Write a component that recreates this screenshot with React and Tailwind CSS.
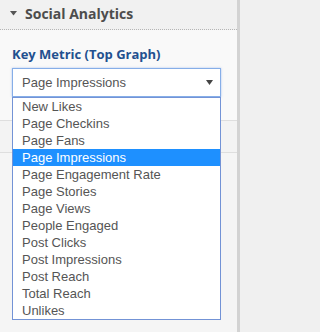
const metrics = [
  'New Likes',
  'Page Checkins',
  'Page Fans',
  'Page Impressions',
  'Page Engagement Rate',
  'Page Stories',
  'Page Views',
  'People Engaged',
  'Post Clicks',
  'Post Impressions',
  'Post Reach',
  'Total Reach',
  'Unlikes',
]

export default function App() {
  const selected = 'Page Impressions'

  return (
    <div className="flex h-[332px] w-full overflow-hidden bg-[#f1f1f1]">
      <div className="relative flex w-[237px] shrink-0 flex-col bg-[#f5f5f5]">
        <div className="flex h-[30px] items-center gap-[8px] border-b border-dotted border-[#b5b5b5] bg-[#f1f1f1] pb-[3px] pl-[10px]">
          <svg width="7" height="5" viewBox="0 0 7 5" className="mt-[1px]">
            <path d="M0 0 L7 0 L3.5 4.5 Z" fill="#555" />
          </svg>
          <span className="font-['Open_Sans',sans-serif] text-[14px] font-bold text-[#4d4d4d]">
            Social Analytics
          </span>
        </div>

        <div className="h-[91px] border-b border-[#dedede] bg-[#f9f9f9] px-[12px] pt-[15px]">
          <div className="font-['Open_Sans',sans-serif] text-[13px] leading-[18px] font-bold text-[#22508f]">
            Key Metric (Top Graph)
          </div>
          <div className="mt-[5px] flex h-[29px] w-[209px] items-center justify-between border border-[#86aee8] bg-white pr-[7px] pl-[9px] shadow-[0_0_2px_rgba(90,140,230,0.5)]">
            <span className="font-['Liberation_Sans',Arial,sans-serif] text-[13px] text-[#555]">{selected}</span>
            <svg width="7" height="5" viewBox="0 0 7 5">
              <path d="M0 0 L7 0 L3.5 5 Z" fill="#444" />
            </svg>
          </div>
        </div>

        <div className="h-[32px] border-b border-[#dedede] bg-[#f3f3f3]" />
        <div className="flex-1 bg-[#f5f5f5]" />

        <ul className="absolute top-[97px] left-[12px] w-[209px] border border-[#7393d6] bg-white font-['Liberation_Sans',Arial,sans-serif] text-[13px]">
          {metrics.map((metric) => (
            <li
              key={metric}
              className={`h-[17px] pl-[9px] leading-[17px] ${
                metric === selected ? 'bg-[#1e90ff] text-white' : 'text-[#555]'
              }`}
            >
              {metric}
            </li>
          ))}
        </ul>
      </div>
      <div className="w-[3px] shrink-0 bg-[#d3d3d3]" />
      <div className="flex-1 bg-[#f0f0f0]" />
    </div>
  )
}
